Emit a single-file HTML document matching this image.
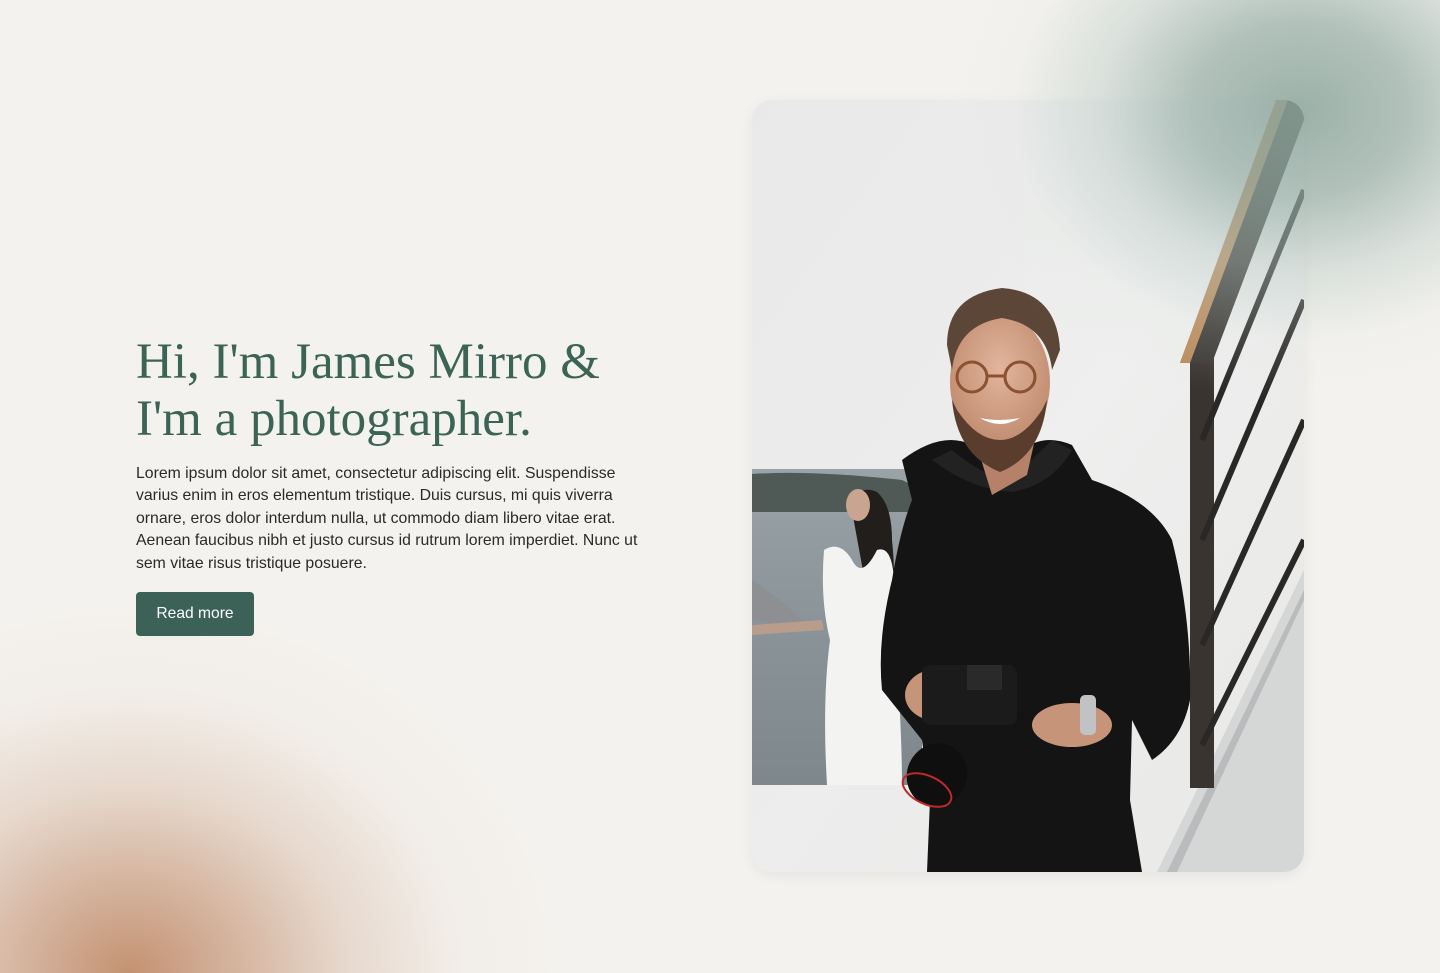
<!DOCTYPE html>
<html><head><meta charset="utf-8"><style>
html,body{margin:0;padding:0;overflow:hidden;width:1440px;height:973px;}
#wrap{width:1440px;height:973px;background:#f4f2ee;position:relative;overflow:hidden;font-family:"Liberation Sans",sans-serif;}
.blob1{position:absolute;left:0;top:0;width:1440px;height:973px;background:radial-gradient(430px 370px at 130px 973px,rgba(196,146,114,1) 0%,rgba(205,165,139,.8) 25%,rgba(220,195,178,.55) 50%,rgba(235,222,212,.25) 75%,rgba(244,242,238,0) 100%);}
.blob2{position:absolute;left:0;top:0;width:1440px;height:973px;z-index:3;pointer-events:none;background:radial-gradient(360px 290px at 1300px 110px,rgba(140,165,156,.85) 0%,rgba(150,173,165,.7) 30%,rgba(185,202,196,.45) 55%,rgba(225,230,226,.15) 80%,rgba(244,242,238,0) 100%);}
h1{position:absolute;left:136px;top:334px;margin:0;font-family:"Liberation Serif",serif;font-weight:400;font-size:51px;line-height:57px;color:#3b6356;white-space:nowrap;}
p{position:absolute;left:136px;top:463px;width:560px;margin:0;font-size:15.8px;line-height:22.4px;color:#2a2a2a;white-space:nowrap;}
.btn{position:absolute;left:136px;top:592px;width:118px;height:44px;background:#3c6156;border-radius:4px;color:#fff;font-size:15.6px;line-height:44px;text-align:center;}
.card{position:absolute;left:752px;top:100px;width:552px;height:772px;border-radius:20px;overflow:hidden;z-index:2;box-shadow:0 4px 14px rgba(0,0,0,.06);}
</style></head><body><div id="wrap">
<div class="blob1"></div>
<h1>Hi, I'm James Mirro &amp;<br>I'm a photographer.</h1>
<p>Lorem ipsum dolor sit amet, consectetur adipiscing elit. Suspendisse<br>varius enim in eros elementum tristique. Duis cursus, mi quis viverra<br>ornare, eros dolor interdum nulla, ut commodo diam libero vitae erat.<br>Aenean faucibus nibh et justo cursus id rutrum lorem imperdiet. Nunc ut<br>sem vitae risus tristique posuere.</p>
<div class="btn">Read more</div>
<div class="card">
<svg width="552" height="772" viewBox="0 0 552 772">
<defs>
<linearGradient id="wall" x1="0" y1="0" x2="1" y2="1"><stop offset="0" stop-color="#e6e7e6"/><stop offset=".5" stop-color="#eeefee"/><stop offset="1" stop-color="#e8e8e6"/></linearGradient>
<linearGradient id="lake" x1="0" y1="0" x2="0" y2="1"><stop offset="0" stop-color="#9aa3a6"/><stop offset=".4" stop-color="#8c969b"/><stop offset="1" stop-color="#7d878c"/></linearGradient>
<radialGradient id="skin" cx=".5" cy=".4" r=".6"><stop offset="0" stop-color="#e2b59c"/><stop offset="1" stop-color="#bf8a6e"/></radialGradient>
</defs>
<rect width="552" height="772" fill="url(#wall)"/>
<rect x="0" y="0" width="272" height="772" fill="#ebebeb" opacity=".6"/>
<rect x="0" y="369" width="170" height="316" fill="url(#lake)"/>
<path d="M0 374 Q60 370 150 380 L170 390 L170 412 L0 412 Z" fill="#4f5a56"/>
<path d="M0 480 Q30 500 50 520 L40 535 Q20 520 0 520Z" fill="#8d8f93"/>
<path d="M98 400 Q110 385 125 392 Q140 405 140 440 Q145 490 138 520 L120 520 Z" fill="#221e1c"/>
<ellipse cx="106" cy="405" rx="12" ry="16" fill="#c9a58f"/>
<path d="M72 450 Q88 440 100 460 Q110 480 125 450 Q140 445 142 480 L145 560 Q150 640 150 685 L75 685 Q70 600 78 540 Q68 500 72 450Z" fill="#f3f3f1"/>
<path d="M0 525 L70 520 L72 530 L0 535Z" fill="#b89c8c"/>
<path d="M405 772 L552 470 L552 772Z" fill="#d5d6d6"/>
<path d="M415 772 L552 490 L552 500 L425 772Z" fill="#b9bbbc"/>
<rect x="438" y="258" width="24" height="430" fill="#3a3431"/>
<g stroke="#2a2827" stroke-width="6" fill="none">
<line x1="450" y1="340" x2="552" y2="90"/>
<line x1="450" y1="440" x2="552" y2="200"/>
<line x1="450" y1="545" x2="552" y2="320"/>
<line x1="450" y1="645" x2="552" y2="440"/>
</g>
<path d="M428 263 L525 0 L552 0 L552 20 L460 263Z" fill="#3b3835"/>
<path d="M428 263 L524 0 L536 0 L438 263Z" fill="#b98a5c"/>
<path d="M150 360 Q190 330 220 345 L260 360 Q285 330 320 345 L340 380 Q400 400 420 440 Q440 520 438 600 Q430 640 400 660 L380 620 L378 700 L390 772 L175 772 L178 700 L170 640 L130 590 Q125 540 140 480 Q148 430 160 400 Z" fill="#141414"/>
<path d="M180 360 Q220 390 260 392 Q300 385 320 350 L300 340 Q270 370 255 380 Q230 375 200 350Z" fill="#222"/>
<path d="M220 330 L240 395 L275 375 L285 330Z" fill="#b58168"/>
<ellipse cx="248" cy="282" rx="50" ry="68" fill="url(#skin)"/>
<path d="M200 300 Q205 355 248 372 Q290 355 295 300 L290 310 Q270 340 248 340 Q225 340 205 310Z" fill="#5b3d2e"/>
<path d="M195 245 Q195 195 250 188 Q305 192 308 250 L300 270 Q295 225 250 218 Q205 225 200 270Z" fill="#5c4637"/>
<g fill="none" stroke="#8a5233" stroke-width="3"><circle cx="220" cy="277" r="15"/><circle cx="268" cy="277" r="15"/><line x1="235" y1="276" x2="253" y2="276"/></g>
<path d="M228 318 Q248 330 268 318 Q248 322 228 318Z" fill="#fff"/>
<ellipse cx="185" cy="595" rx="32" ry="26" fill="#c69478"/>
<ellipse cx="320" cy="625" rx="40" ry="22" fill="#c69478"/>
<rect x="170" y="565" width="95" height="60" rx="8" fill="#1b1b1b"/>
<rect x="215" y="565" width="35" height="25" fill="#2a2a2a"/>
<ellipse cx="185" cy="675" rx="30" ry="32" fill="#0f0f0f" transform="rotate(25 185 675)"/>
<ellipse cx="175" cy="690" rx="26" ry="14" fill="none" stroke="#c0282a" stroke-width="2" transform="rotate(25 175 690)"/>
<rect x="328" y="595" width="16" height="40" rx="5" fill="#c0c2c4"/>
</svg>
</div>
<div class="blob2"></div>
</div></body></html>
